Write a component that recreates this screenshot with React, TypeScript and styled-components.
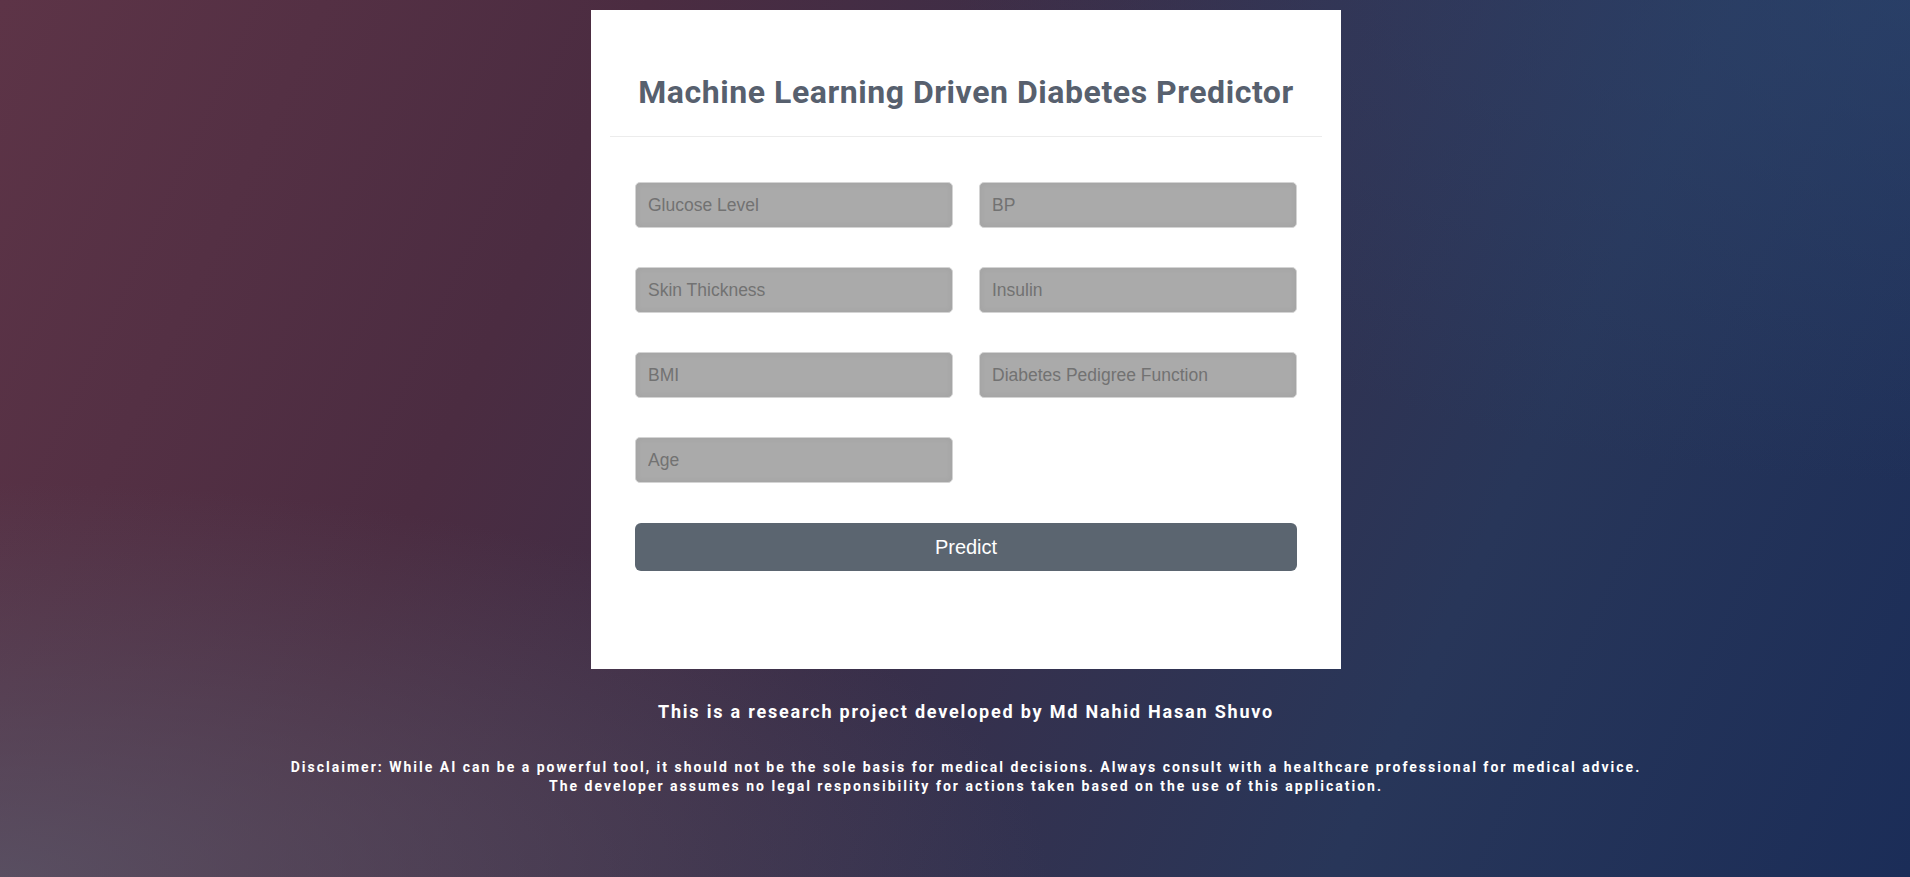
import React from 'react';
import styled, { createGlobalStyle } from 'styled-components';

const GlobalStyle = createGlobalStyle`
  html, body {
    margin: 0;
    padding: 0;
  }
  body {
    min-height: 100vh;
    font-family: 'Roboto', 'Liberation Sans', sans-serif;
    background:
      radial-gradient(ellipse 55% 45% at 0% 100%, rgba(92, 92, 110, 0.7), rgba(92, 92, 110, 0) 100%),
      radial-gradient(ellipse 50% 55% at 100% 0%, rgba(44, 70, 112, 0.6), rgba(44, 70, 112, 0) 100%),
      linear-gradient(115deg, #5d3447 0%, #4b2c41 28%, #3b2e48 48%, #283659 75%, #1b2d58 100%);
    background-attachment: fixed;
  }
`;

const Page = styled.main`
  display: flex;
  flex-direction: column;
  align-items: center;
  min-height: 877px;
  box-sizing: border-box;
  padding: 10px 0 0 22px;
`;

const Card = styled.section`
  width: 750px;
  box-sizing: border-box;
  background: #ffffff;
  padding: 0 19px 98px;
`;

const Header = styled.header`
  padding: 64px 0 25px;
  border-bottom: 1px solid #ececec;
`;

const Title = styled.h1`
  margin: 0;
  font-family: 'Roboto', sans-serif;
  font-weight: 700;
  font-size: 32px;
  line-height: 37px;
  letter-spacing: 0.55px;
  color: #57606e;
  text-align: center;
`;

const Form = styled.form`
  display: grid;
  grid-template-columns: 1fr 1fr;
  column-gap: 26px;
  row-gap: 39px;
  padding: 45px 25px 0;
`;

const Field = styled.input`
  height: 46px;
  box-sizing: border-box;
  width: 100%;
  padding: 0 12px;
  background: #aaaaaa;
  border: 1px solid #d4d4d4;
  border-radius: 5px;
  box-shadow: inset 0 0 6px rgba(0, 0, 0, 0.06);
  font-family: 'Liberation Sans', Arial, sans-serif;
  font-size: 17.5px;
  color: #444;
  outline: none;
  &::placeholder {
    color: #727272;
  }
`;

const PredictButton = styled.button`
  grid-column: 1 / -1;
  margin-top: 1px;
  height: 48px;
  border: none;
  border-radius: 6px;
  background: #5b6570;
  color: #ffffff;
  font-family: 'Liberation Sans', Arial, sans-serif;
  font-size: 20px;
  cursor: pointer;
`;

const Credit = styled.p`
  margin: 32px 0 0;
  font-family: 'Roboto', sans-serif;
  font-weight: 700;
  font-size: 18px;
  letter-spacing: 1.8px;
  color: #ffffff;
  text-align: center;
`;

const Disclaimer = styled.p`
  margin: 36px 0 0;
  font-family: 'Roboto', sans-serif;
  font-weight: 700;
  font-size: 14px;
  line-height: 19px;
  letter-spacing: 2px;
  color: #ffffff;
  text-align: center;
`;

const fields = [
  'Glucose Level',
  'BP',
  'Skin Thickness',
  'Insulin',
  'BMI',
  'Diabetes Pedigree Function',
  'Age',
];

const App: React.FC = () => {
  return (
    <>
      <GlobalStyle />
      <Page>
        <Card>
          <Header>
            <Title>Machine Learning Driven Diabetes Predictor</Title>
          </Header>
          <Form onSubmit={(e) => e.preventDefault()}>
            {fields.map((name) => (
              <Field key={name} type="text" placeholder={name} />
            ))}
            <PredictButton type="submit">Predict</PredictButton>
          </Form>
        </Card>
        <Credit>This is a research project developed by Md Nahid Hasan Shuvo</Credit>
        <Disclaimer>
          Disclaimer: While AI can be a powerful tool, it should not be the sole basis for medical
          decisions. Always consult with a healthcare professional for medical advice.
          <br />
          The developer assumes no legal responsibility for actions taken based on the use of this
          application.
        </Disclaimer>
      </Page>
    </>
  );
};

export default App;
